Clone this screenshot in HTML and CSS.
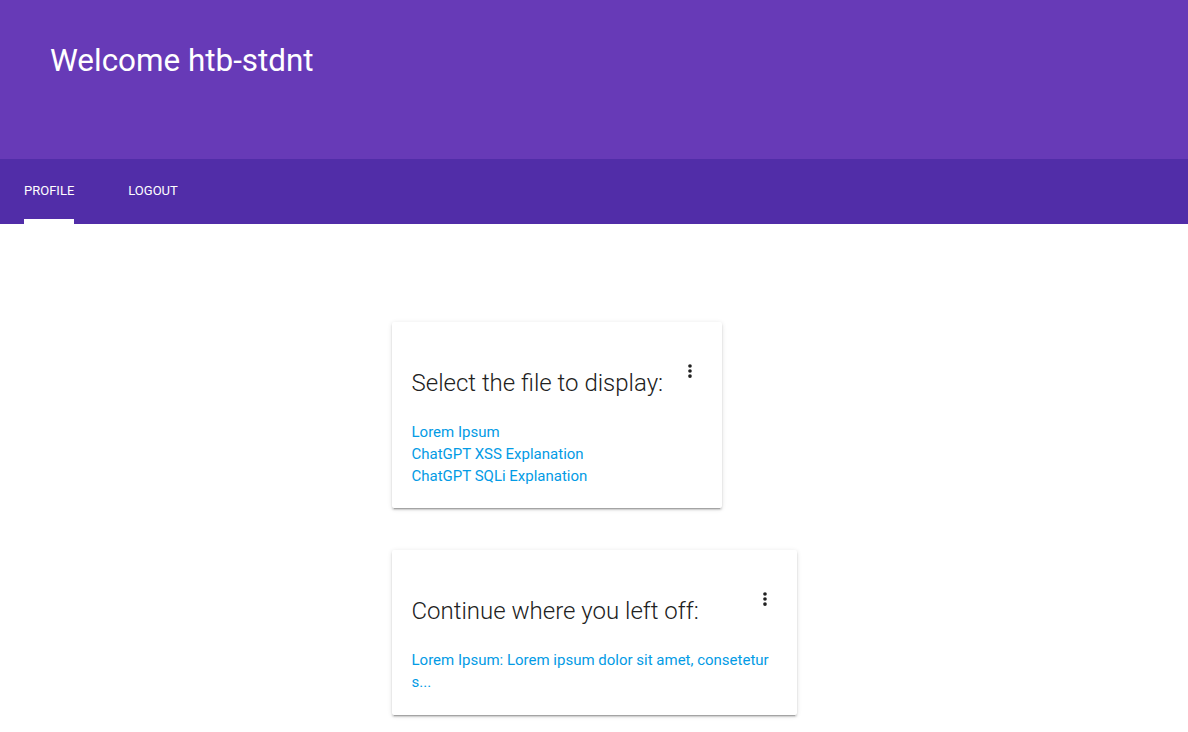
FILE: index.html
```html
<!DOCTYPE html>
<html lang="en">
<head>
<meta charset="utf-8">
<title>Welcome htb-stdnt</title>
<link rel="stylesheet" href="styles.css">
</head>
<body>
<header class="header">
  <div class="header-title-row">
    <h1 class="header-title">Welcome htb-stdnt</h1>
  </div>
  <nav class="tab-bar">
    <a class="tab tab--active" href="#"><span class="tab-label">PROFILE</span><span class="tab-indicator"></span></a>
    <a class="tab" href="#"><span class="tab-label">LOGOUT</span><span class="tab-indicator"></span></a>
  </nav>
</header>
<main class="content">
  <section class="card card--narrow">
    <div class="card-head">
      <h2 class="card-title">Select the file to display:</h2>
      <button class="card-menu" aria-label="More">
        <svg viewBox="0 0 24 24" width="22" height="22"><circle cx="12" cy="6.5" r="2"/><circle cx="12" cy="12" r="2"/><circle cx="12" cy="17.5" r="2"/></svg>
      </button>
    </div>
    <div class="card-links">
      <a class="card-link" href="#">Lorem Ipsum</a>
      <a class="card-link" href="#">ChatGPT XSS Explanation</a>
      <a class="card-link" href="#">ChatGPT SQLi Explanation</a>
    </div>
  </section>
  <section class="card card--wide">
    <div class="card-head">
      <h2 class="card-title">Continue where you left off:</h2>
      <button class="card-menu" aria-label="More">
        <svg viewBox="0 0 24 24" width="22" height="22"><circle cx="12" cy="6.5" r="2"/><circle cx="12" cy="12" r="2"/><circle cx="12" cy="17.5" r="2"/></svg>
      </button>
    </div>
    <div class="card-links">
      <a class="card-link" href="#">Lorem Ipsum: Lorem ipsum dolor sit amet, consetetur s...</a>
    </div>
  </section>
</main>
</body>
</html>
```
FILE: styles.css
```css
* { box-sizing: border-box; }
html, body {
  margin: 0;
  padding: 0;
  background: #ffffff;
  font-family: Roboto, "Liberation Sans", sans-serif;
}
.header {
  background: #673ab7;
  color: #ffffff;
}
.header-title-row {
  height: 159px;
  padding: 41px 0 0 50px;
}
.header-title {
  margin: 0;
  font-size: 31.4px;
  line-height: 40px;
  font-weight: 400;
  letter-spacing: 0;
}
.tab-bar {
  background: #512da8;
  height: 65px;
  display: flex;
  gap: 54px;
  padding-left: 24px;
}
.tab {
  display: flex;
  flex-direction: column;
  justify-content: space-between;
  color: #ffffff;
  text-decoration: none;
  padding-top: 24px;
}
.tab-label {
  font-size: 13px;
  line-height: 16px;
  font-weight: 400;
}
.tab-indicator {
  height: 5px;
}
.tab--active .tab-indicator {
  background: #ffffff;
}
.content {
  width: 405px;
  margin: 98px auto 0;
  display: flex;
  flex-direction: column;
  align-items: flex-start;
  gap: 42px;
  padding-bottom: 40px;
}
.card {
  background: #ffffff;
  border-radius: 2px;
  box-shadow: 0 2px 2px 0 rgba(0,0,0,.14), 0 3px 1px -2px rgba(0,0,0,.2), 0 1px 5px 0 rgba(0,0,0,.12);
  padding: 45px 20px 22px;
}
.card--narrow { width: 330px; padding-bottom: 21px; }
.card--wide { width: 405px; }
.card-head {
  position: relative;
}
.card-title {
  margin: 0;
  font-size: 24px;
  line-height: 32px;
  font-weight: 300;
  color: #212121;
}
.card-menu {
  position: absolute;
  right: -1px;
  top: -9px;
  width: 26px;
  height: 26px;
  padding: 2px;
  border: 0;
  background: transparent;
  display: flex;
  align-items: center;
  justify-content: center;
}
.card-menu svg { fill: #212121; }
.card-links {
  margin-top: 22px;
  display: flex;
  flex-direction: column;
}
.card-link {
  font-size: 15px;
  line-height: 22px;
  color: #039be5;
  text-decoration: none;
}
```
